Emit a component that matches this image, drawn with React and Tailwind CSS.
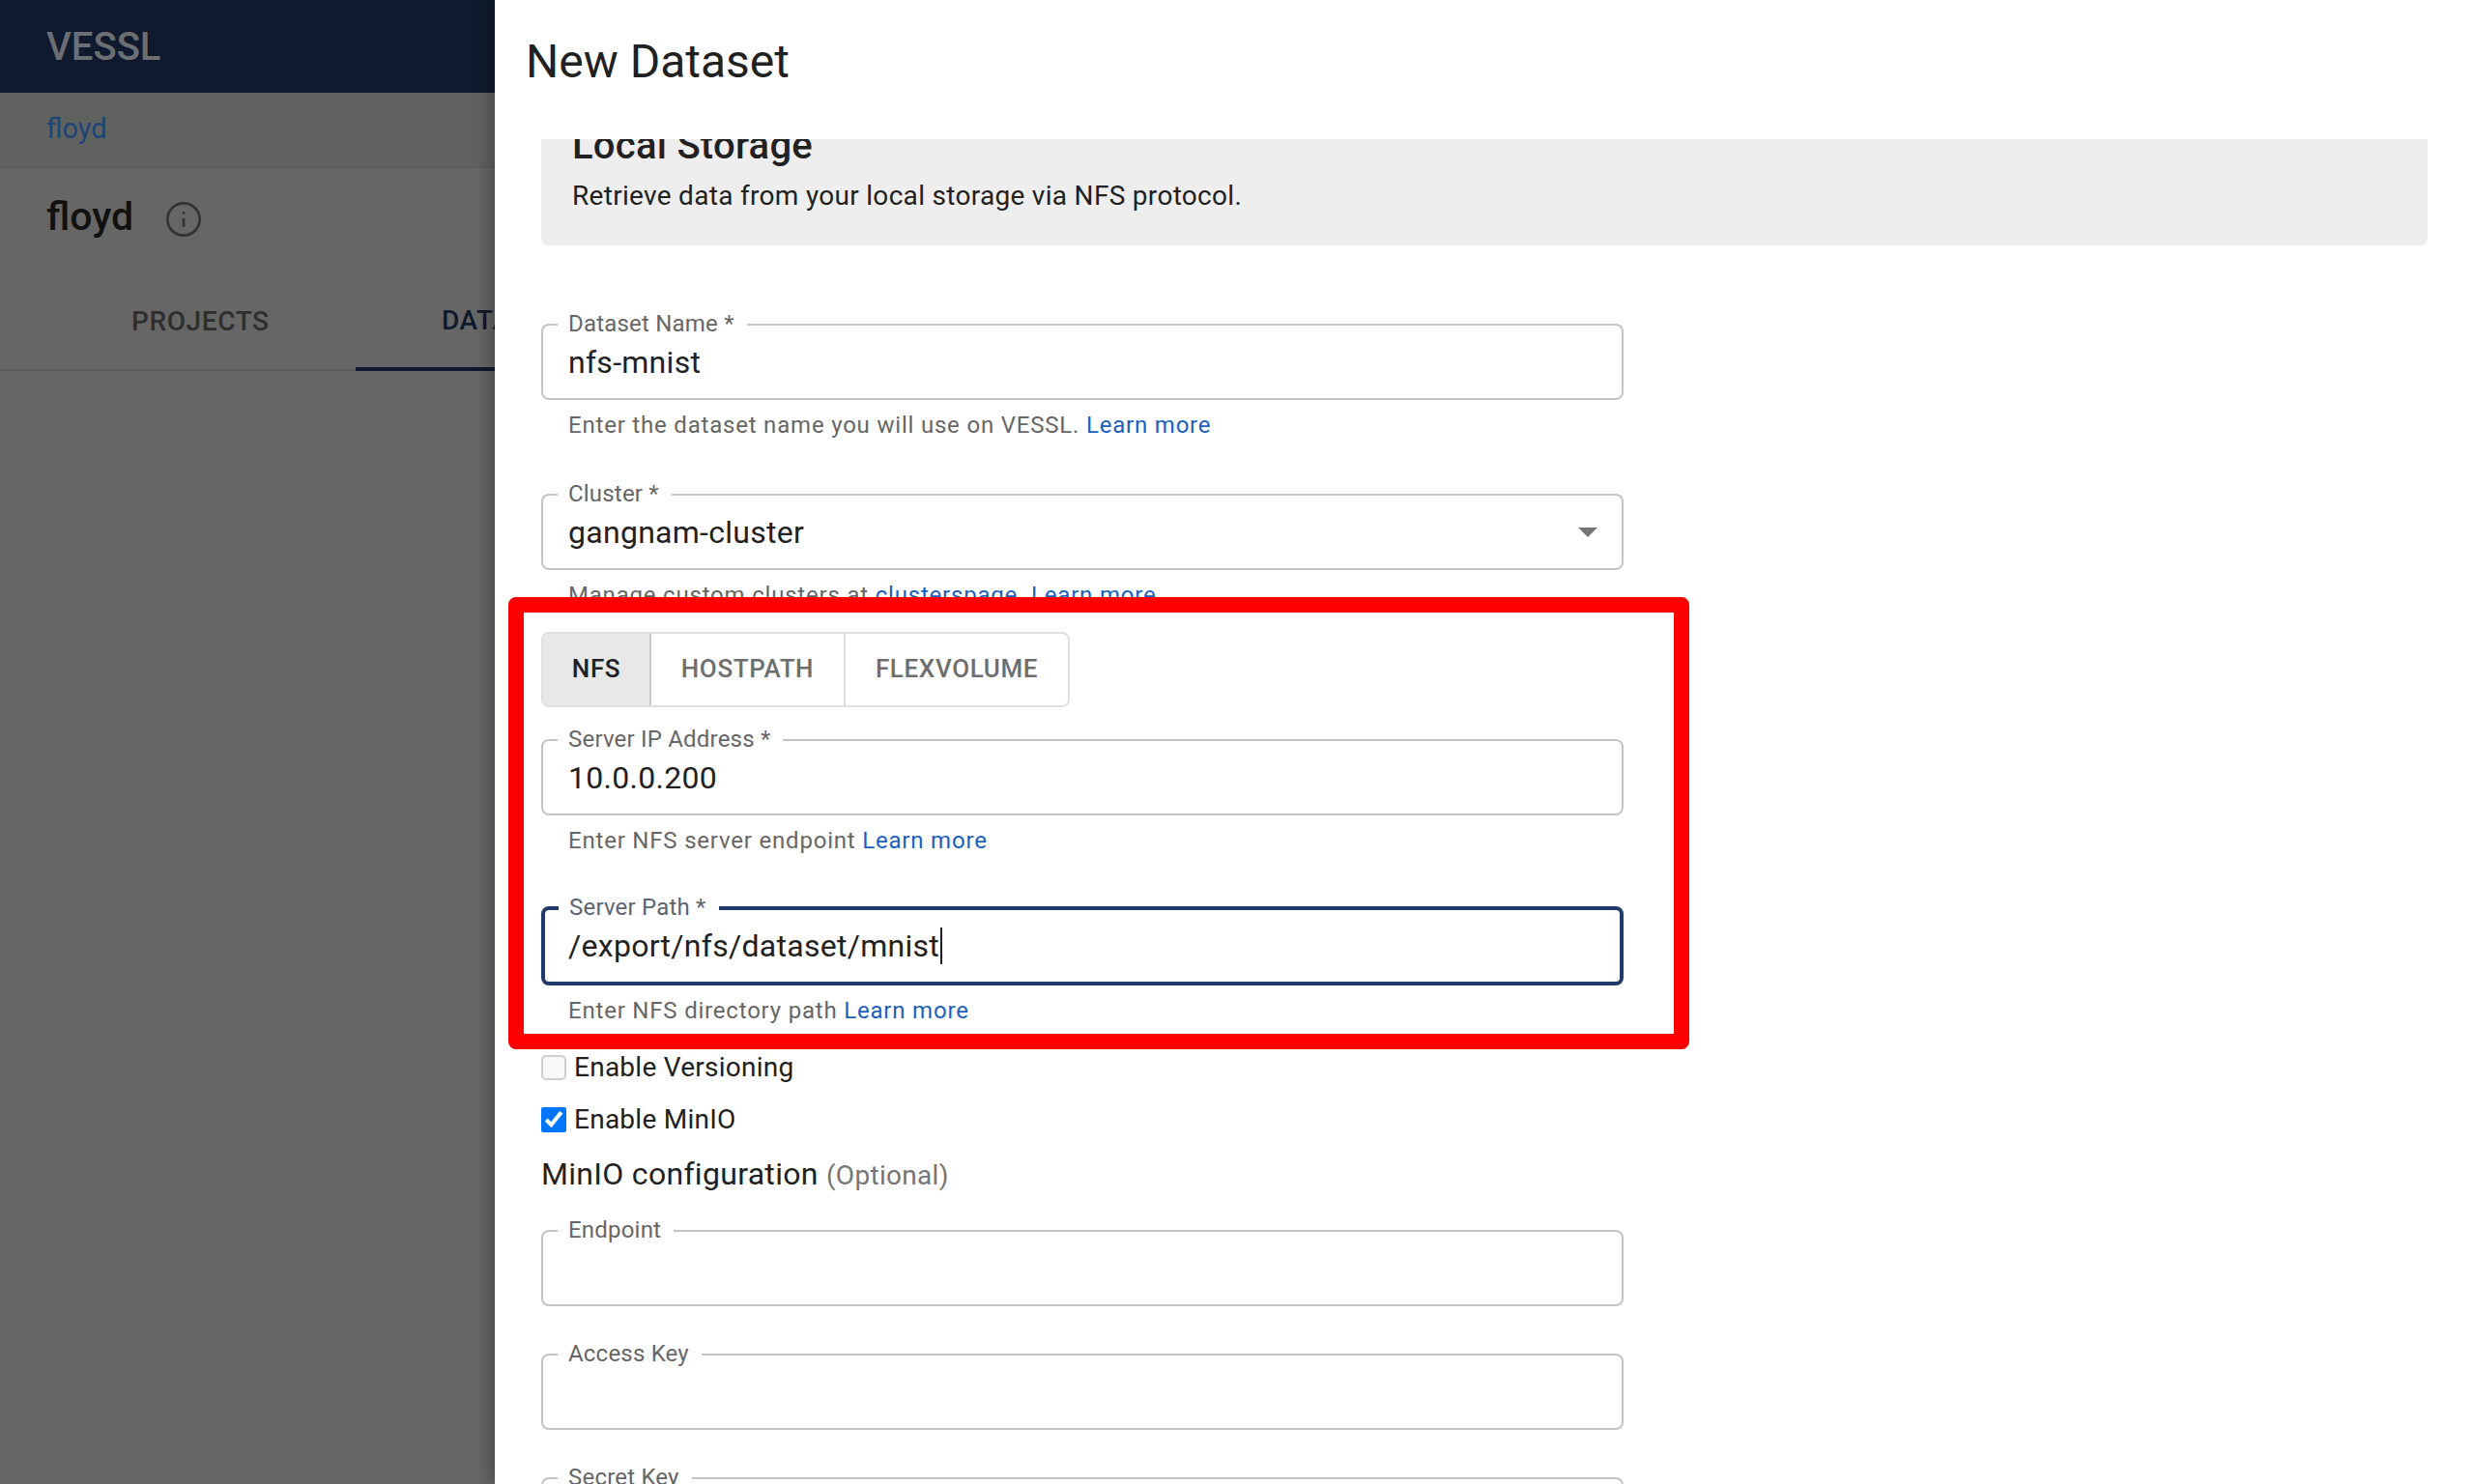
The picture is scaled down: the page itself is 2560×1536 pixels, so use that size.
import React from 'react';
import { Info } from 'lucide-react';

const FONT = "font-['Roboto','Liberation_Sans',sans-serif]";

const Field = ({ label, value, focused, arrow, caret, className = '' }) => (
    <div className={`relative ${focused ? 'h-[82px] border-4 border-[#1f3a6b]' : 'h-[79px] border-2 border-[#c4c4c4]'} w-[1120px] rounded-lg bg-white ${className}`}>
        <span className={`absolute ${focused ? '-top-[21px] left-[14px]' : '-top-[20px] left-[15px]'} bg-white pl-[11px] pr-[13px] text-[24px] leading-[36px] tracking-[0.2px] ${focused ? 'text-[#5b6472]' : 'text-[#666666]'}`}>
            {label}
        </span>
        <div className={`flex h-full items-center ${focused ? 'pl-[24px]' : 'pl-[26px]'} text-[32px] tracking-[0.28px] text-[#212121]`}>
            {value}
            {caret && <span className="ml-[1px] h-[38px] w-[2px] bg-[#212121]" />}
        </div>
        {arrow && (
            <svg className="absolute right-[11px] top-[13px] h-[48px] w-[48px] fill-[#757575]" viewBox="0 0 24 24">
                <path d="M7 10l5 5 5-5z" />
            </svg>
        )}
    </div>
);

const Helper = ({ children, className = '' }) => (
    <p className={`ml-[28px] mt-[8px] h-[36px] text-[24px] leading-[36px] tracking-[0.8px] text-[#666666] ${className}`}>
        {children}
    </p>
);

const LearnMore = ({ children = 'Learn more' }) => <a className="text-[#1a5fc0]">{children}</a>;

const App = () => {
    return (
        <div className={`relative flex h-[1536px] w-[2560px] overflow-hidden bg-white ${FONT}`}>
            {/* dimmed page behind the drawer */}
            <aside className="h-full w-[512px] shrink-0 overflow-hidden bg-[#666666]">
                <div className="flex h-[96px] items-center bg-[#0f1a2e] pl-[48px] pt-[2px] text-[40px] font-medium text-[#6b6e72]">VESSL</div>
                <div className="flex h-[78px] items-center border-b-2 border-[#5c5e5c] bg-[#606260] pl-[48px] text-[29px] text-[#1d4477]">floyd</div>
                <div className="flex h-[100px] items-center gap-[32px] pl-[48px] pt-[2px] text-[41px] font-medium text-[#111111]">
                    floyd
                    <Info size={40} strokeWidth={1.6} className="mt-[3px] text-[#333333]" />
                </div>
                <div className="mt-[10px] flex h-[100px] whitespace-nowrap border-b-2 border-[#5c5c5c] pl-[88px] text-[28px] font-medium tracking-[0.6px]">
                    <div className="flex h-[100px] w-[280px] shrink-0 items-center pb-[2px] pl-[48px] text-[#2e2e2e]">PROJECTS</div>
                    <div className="flex h-[100px] w-[300px] shrink-0 items-center border-b-4 border-[#0f1a2e] pl-[89px] text-[#0f1a2e]">DATASETS</div>
                </div>
            </aside>

            <main className="relative flex h-full flex-1 flex-col shadow-[-6px_0_14px_rgba(0,0,0,0.25)]">
                <h1 className="flex h-[144px] shrink-0 items-start pl-[32px] pt-[34px] text-[48px] leading-[60px] text-[#212121]">New Dataset</h1>
                <div className="flex-1 overflow-hidden pl-[48px]">
                    <div className="flex h-[110px] w-[1952px] flex-col rounded-b-lg bg-[#eeeeee] pl-[32px]">
                        <h2 className="-mt-[25px] text-[40px] font-medium leading-[64px] tracking-[0.25px] text-[#212121]">Local Storage</h2>
                        <p className="text-[28px] leading-[40px] tracking-[0.3px] text-[#212121]">Retrieve data from your local storage via NFS protocol.</p>
                    </div>

                    <Field className="mt-[81px]" label="Dataset Name *" value="nfs-mnist" />
                    <Helper>Enter the dataset name you will use on VESSL. <LearnMore /></Helper>

                    <Field className="mt-[53px]" label="Cluster *" value="gangnam-cluster" arrow />
                    <Helper>Manage custom clusters at <LearnMore>clusterspage.</LearnMore> <LearnMore /></Helper>

                    <div className="mt-[20px] flex h-[78px] w-[547px] overflow-hidden rounded-lg border-2 border-[#e0e0e0] text-[26px] font-medium tracking-[0.6px] text-[#6e6e6e]">
                        <div className="flex w-[112px] items-center justify-center border-r-2 border-[#c8c8c8] bg-[#e8e8e8] pb-[2px] text-[#212121]">NFS</div>
                        <div className="flex w-[201px] items-center justify-center border-r-2 border-[#e0e0e0] pb-[2px]">HOSTPATH</div>
                        <div className="flex flex-1 items-center justify-center pb-[2px]">FLEXVOLUME</div>
                    </div>

                    <Field className="mt-[33px]" label="Server IP Address *" value="10.0.0.200" />
                    <Helper>Enter NFS server endpoint <LearnMore /></Helper>

                    <Field className="mt-[50px]" label="Server Path *" value="/export/nfs/dataset/mnist" focused caret />
                    <Helper>Enter NFS directory path <LearnMore /></Helper>

                    <label className="mt-[23px] flex h-[36px] items-center gap-[8px] text-[28px] tracking-[0.25px] text-[#212121]">
                        <input type="checkbox" className="h-[26px] w-[26px] appearance-none rounded-[5px] border-2 border-[#cfcfcf] bg-[#f8f8f8]" />
                        Enable Versioning
                    </label>
                    <label className="mt-[18px] flex h-[36px] items-center gap-[8px] text-[28px] tracking-[0.25px] text-[#212121]">
                        <input type="checkbox" defaultChecked className="m-0 h-[26px] w-[26px] accent-[#0075ff]" />
                        Enable MinIO
                    </label>
                    <h3 className="mt-[16px] h-[44px] text-[32px] leading-[44px] tracking-[0.3px] text-[#212121]">
                        MinIO configuration <span className="text-[28px] tracking-[0.3px] text-[#757575]">(Optional)</span>
                    </h3>

                    <Field className="mt-[36px]" label="Endpoint" value="" />
                    <Field className="mt-[49px]" label="Access Key" value="" />
                    <Field className="mt-[49px]" label="Secret Key" value="" />
                </div>
            </main>

            {/* red annotation frame */}
            <div className="pointer-events-none absolute left-[526px] top-[618px] h-[468px] w-[1222px] rounded-lg border-[16px] border-[#ff0000]" />
        </div>
    );
};

export default App;
